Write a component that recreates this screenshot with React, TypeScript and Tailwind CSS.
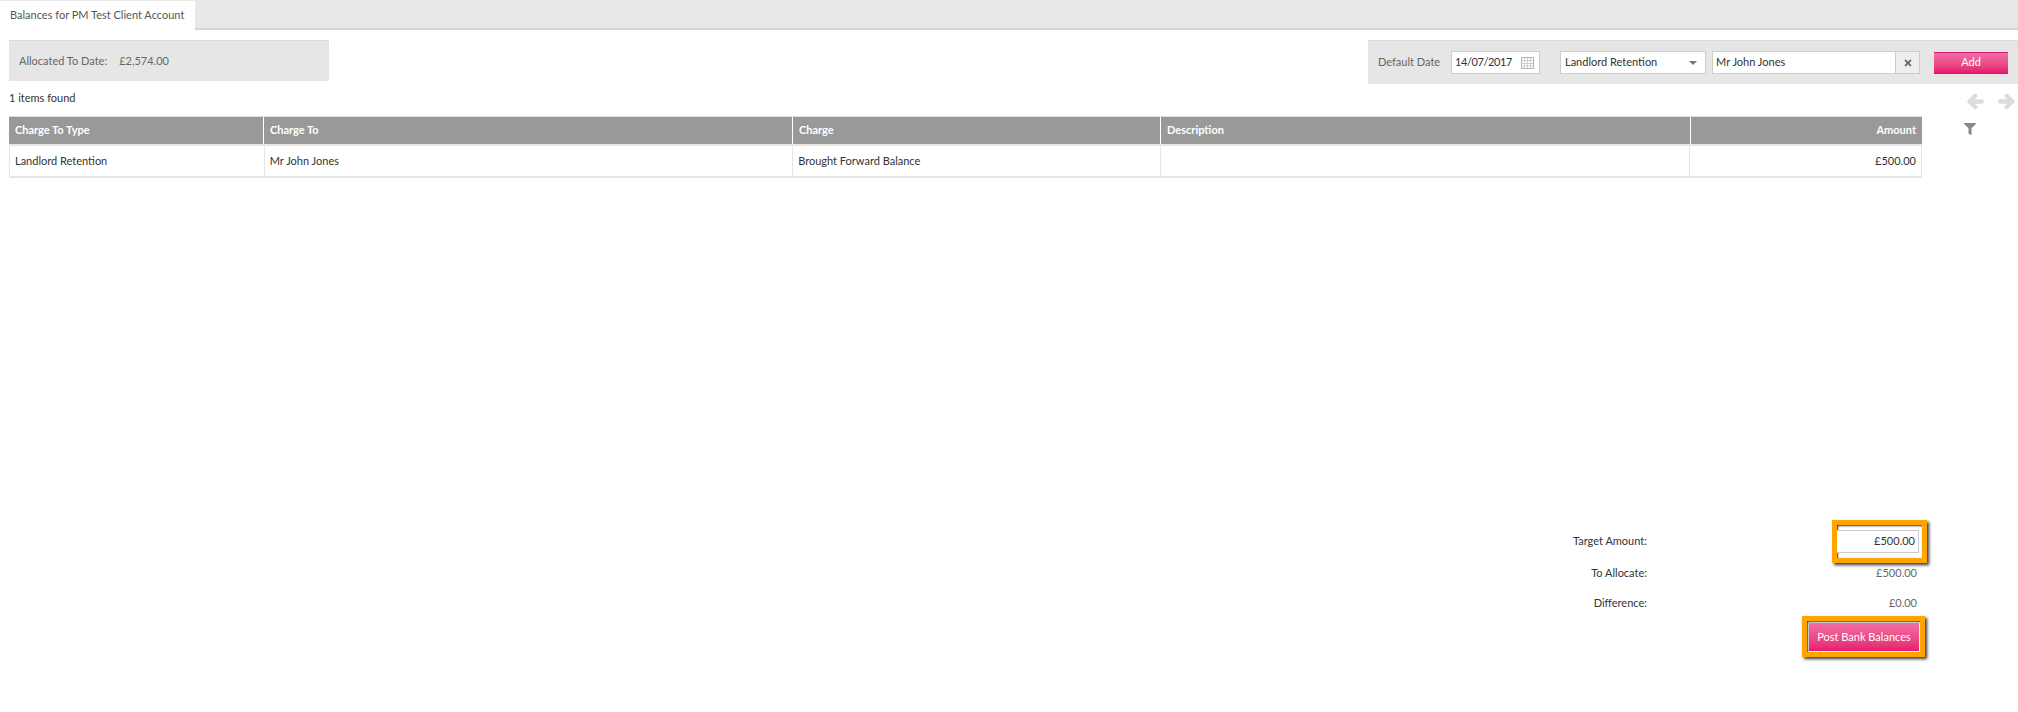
import { FaArrowLeft, FaArrowRight, FaFilter, FaTimes } from 'react-icons/fa';

const columns = [
  { label: 'Charge To Type', width: 'w-[255px]', value: 'Landlord Retention' },
  { label: 'Charge To', width: 'w-[529px]', value: 'Mr John Jones' },
  { label: 'Charge', width: 'w-[368px]', value: 'Brought Forward Balance' },
  { label: 'Description', width: 'w-[530px]', value: '' },
  { label: 'Amount', width: 'w-[231px]', value: '£500.00', right: true },
];

function CalendarIcon() {
  return (
    <svg width="13" height="12" viewBox="0 0 13 12" className="shrink-0">
      <rect x="0.5" y="0.5" width="12" height="11" fill="none" stroke="#b5b5b5" />
      <path d="M3.5 1v10M6.5 1v10M9.5 1v10M1 3.5h11M1 6.5h11M1 9h11" stroke="#cfcfcf" />
    </svg>
  );
}

export default function App() {
  return (
    <div className="flex h-[712px] w-[2018px] flex-col overflow-hidden bg-white font-['Lato','Open_Sans',sans-serif] text-[11px] text-[#333]">
      <div className="flex h-[30px] items-end border-b-2 border-[#d4d4d4] bg-[#e8e8e8]">
        <div className="-mb-[2px] flex h-[29px] w-[195px] items-center bg-white pl-[10px] text-[#555]">
          Balances for PM Test Client Account
        </div>
      </div>

      <div className="mt-[10px] flex items-start justify-between pl-[9px]">
        <div className="flex h-[41px] w-[320px] items-center gap-[12px] border-t border-[#d8d8d8] bg-[#e6e6e6] pl-[10px] text-[#666]">
          <span>Allocated To Date:</span>
          <span>£2,574.00</span>
        </div>

        <div className="flex h-[44px] w-[650px] items-center border-t border-[#d8d8d8] bg-[#e6e6e6] pl-[10px]">
          <span className="w-[63px] whitespace-nowrap text-[#666]">Default Date</span>
          <div className="ml-[10px] flex h-[23px] w-[89px] items-center justify-between border border-[#ccc] bg-white pl-[3px] pr-[5px]">
            <span className="tracking-[-0.4px]">14/07/2017</span>
            <CalendarIcon />
          </div>
          <div className="ml-[20px] flex h-[23px] w-[146px] items-center justify-between border border-[#ccc] bg-white pl-[4px] pr-[8px]">
            <span>Landlord Retention</span>
            <span className="h-0 w-0 border-x-[4px] border-t-[4px] border-x-transparent border-t-[#777]" />
          </div>
          <div className="ml-[6px] flex h-[23px] w-[208px] border border-[#ccc] bg-white">
            <span className="flex flex-1 items-center pl-[3px]">Mr John Jones</span>
            <span className="flex w-[24px] items-center justify-center border-l border-[#ccc] bg-[#eee] text-[#666]">
              <FaTimes size={10} />
            </span>
          </div>
          <button className="ml-[14px] h-[22px] w-[74px] border-y border-y-[#d8186f] bg-gradient-to-b from-[#f06fa4] to-[#e6186f] text-white">
            Add
          </button>
        </div>
      </div>

      <div className="flex items-start">
        <div className="w-[1922px] pl-[9px]">
          <div className="mt-[6px] leading-[16px]">1 items found</div>
          <div className="mt-[10px] w-[1913px] border-t border-[#dcdcdc]">
            <div className="flex h-[27px] bg-[#999] font-bold text-white">
              {columns.map((c) => (
                <div
                  key={c.label}
                  className={`${c.width} flex items-center border-r border-white px-[6px] last:border-r-0 ${c.right ? 'justify-end' : ''}`}
                >
                  {c.label}
                </div>
              ))}
            </div>
            <div className="flex h-[34px] border-x border-b-2 border-t-2 border-[#e5e5e5]">
              {columns.map((c) => (
                <div
                  key={c.label}
                  className={`${c.width} flex items-center border-r border-[#e5e5e5] px-[5px] last:border-r-0 ${c.right ? 'justify-end' : ''}`}
                >
                  {c.value}
                </div>
              ))}
            </div>
          </div>
        </div>
        <div className="flex flex-1 flex-col">
          <div className="mt-[9px] flex justify-end gap-[14px] pr-[3px] text-[#dcdcdc]">
            <FaArrowLeft size={17} stroke="currentColor" strokeWidth={50} />
            <FaArrowRight size={17} stroke="currentColor" strokeWidth={50} />
          </div>
          <div className="ml-[42px] mt-[13px] text-[#888]">
            <FaFilter size={12} />
          </div>
        </div>
      </div>

      <div className="mt-[342px] flex w-[1927px] flex-col items-end">
        <div className="flex h-[43px] items-center">
          <span className="mr-[185px]">Target Amount:</span>
          <div className="h-[43px] w-[95px] border-[5px] border-[#ffa500] shadow-[2px_2px_3px_#333,inset_1px_1px_2px_#333]">
            <div className="mt-[5px] flex h-[23px] w-[82px] items-center justify-end border border-l-0 border-[#ccc] bg-white pr-[3px]">
              £500.00
            </div>
          </div>
        </div>
        <div className="flex h-[20px] items-center pr-[10px]">
          <span className="mr-[185px]">To Allocate:</span>
          <span className="w-[85px] text-right text-[#666]">£500.00</span>
        </div>
        <div className="mt-[10px] flex h-[20px] items-center pr-[10px]">
          <span className="mr-[185px]">Difference:</span>
          <span className="w-[85px] text-right text-[#666]">£0.00</span>
        </div>
        <div className="mr-[2px] mt-[3px] h-[41px] w-[123px] border-[5px] border-[#ffa500] pb-[1px] pl-[2px] pr-[1px] pt-[2px] shadow-[2px_2px_3px_#333,inset_1px_1px_2px_#333]">
          <button className="h-full w-full bg-gradient-to-b from-[#f06fa4] to-[#e6186f] text-white">
            Post Bank Balances
          </button>
        </div>
      </div>
    </div>
  );
}
